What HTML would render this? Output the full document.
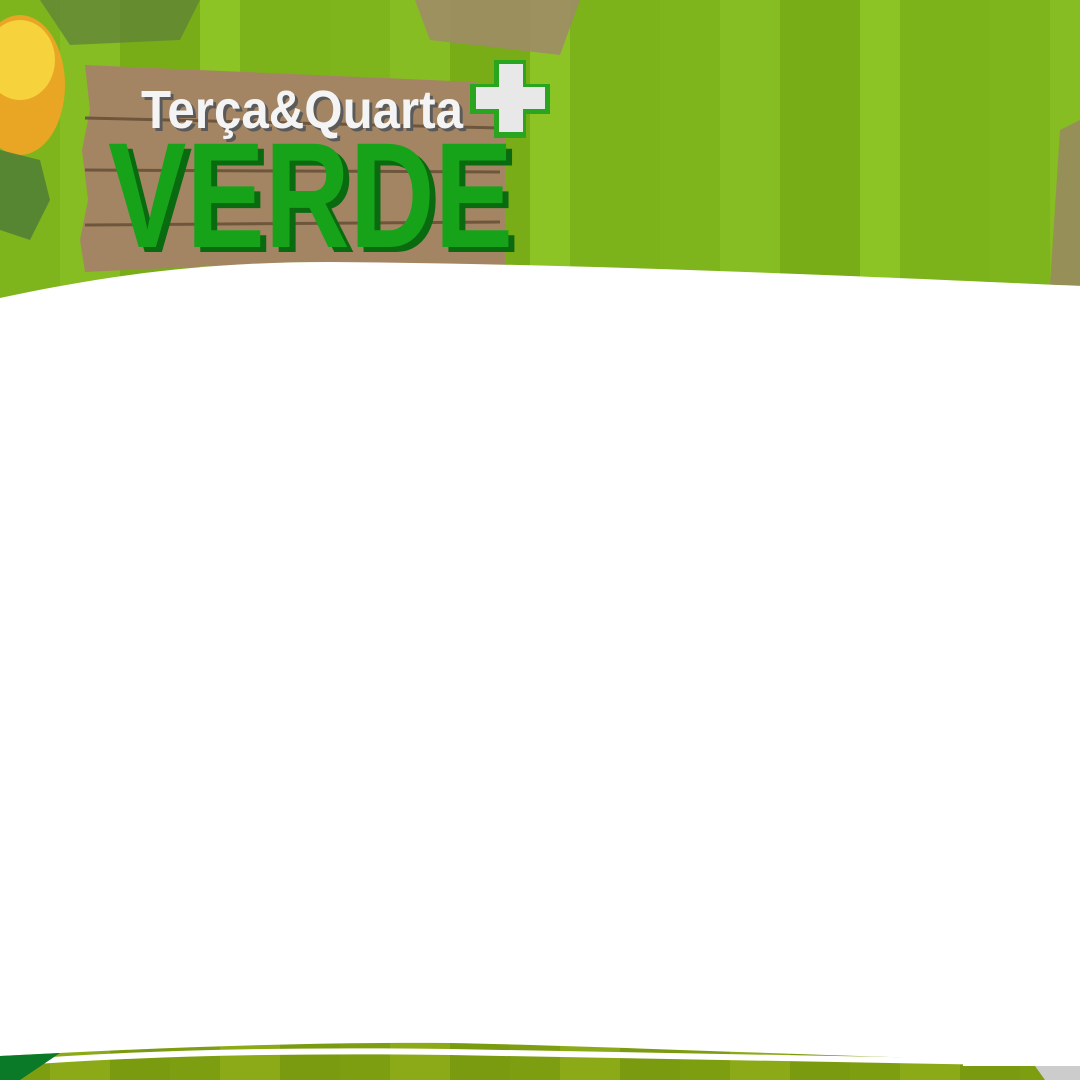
<!DOCTYPE html>
<html><head><meta charset="utf-8"><style>
html,body{margin:0;padding:0}
body{width:1080px;height:1080px;position:relative;overflow:hidden;background:#fff;font-family:"Liberation Sans",sans-serif}
.bg{position:absolute;left:0;top:0;width:1080px;height:320px;
background:repeating-linear-gradient(90deg,#7fb51c 0 60px,#86bd22 60px 120px,#78ad18 120px 200px,#8cc426 200px 240px,#7cb21a 240px 330px);}
.bot{position:absolute;left:0;top:1030px;width:1080px;height:50px;
background:repeating-linear-gradient(90deg,#7e9e12 0 50px,#8caa18 50px 110px,#7a9a10 110px 170px);}
</style></head><body>
<div class="bg"></div>
<div class="bot"></div>
<svg width="1080" height="1080" style="position:absolute;left:0;top:0">
 <ellipse cx="20" cy="85" rx="45" ry="70" fill="#e9a624"/>
 <ellipse cx="20" cy="60" rx="35" ry="40" fill="#f6d23c"/>
 <path d="M0 150 L40 160 L50 200 L30 240 L0 230Z" fill="#4d7a3a" opacity=".8"/>
 <path d="M40 0 L200 0 L180 40 L70 45Z" fill="#5c7f3a" opacity=".7"/>
 <path d="M415 0 L580 0 L560 55 L430 40Z" fill="#a08a6a" opacity=".85"/>
 <path d="M1060 130 L1080 120 L1080 285 L1050 285Z" fill="#9a8566" opacity=".8"/>
 <path d="M85 65 L475 82 L505 90 L505 265 L300 262 L85 272 L80 240 L88 200 L82 150 L90 110Z" fill="#a48563"/>
 <path d="M85 118 L500 128 M85 170 L500 172 M85 225 L500 222" stroke="#6e563c" stroke-width="3"/>
 <path d="M0 298 C120 272 220 262 330 262 C600 264 900 278 1080 286 L1080 1000 L0 1000Z" fill="#fff"/>
 <!-- bottom -->
 <path d="M0 1000 L1080 1000 L1080 1066 L963 1066 L963 1059 C800 1055 600 1046 450 1043 C300 1042 150 1048 0 1056Z" fill="#fff"/>
 <path d="M10 1063 C150 1052 300 1050 450 1052 C700 1055 850 1058 1000 1062" stroke="#fff" stroke-width="6" fill="none"/>
 <path d="M0 1056 C20 1055 40 1054 60 1053 L20 1080 L0 1080Z" fill="#0b7a28"/>
 <path d="M1035 1066 L1080 1066 L1080 1080 L1045 1080Z" fill="#ccc"/>
 <path d="M494 60 h32 v24 h24 v30 h-24 v24 h-32 v-24 h-24 v-30 h24z" fill="#2aa520"/>
 <path d="M499 64 h24 v23 h22 v22 h-22 v23 h-24 v-23 h-23 v-22 h23z" fill="#e8e8e8"/>
 <text x="144" y="131" font-family="Liberation Sans" font-weight="bold" font-size="54" fill="#5a5a5a" textLength="322" lengthAdjust="spacingAndGlyphs">Terça&amp;Quarta</text>
 <text x="141" y="128" font-family="Liberation Sans" font-weight="bold" font-size="54" fill="#f4f4f4" textLength="322" lengthAdjust="spacingAndGlyphs">Terça&amp;Quarta</text>
 <text x="114" y="252" font-family="Liberation Sans" font-weight="bold" font-size="150" fill="#0a6a10" textLength="405" lengthAdjust="spacingAndGlyphs">VERDE</text>
 <text x="108" y="247" font-family="Liberation Sans" font-weight="bold" font-size="150" fill="#16a319" textLength="405" lengthAdjust="spacingAndGlyphs">VERDE</text>
</svg>
</body></html>
